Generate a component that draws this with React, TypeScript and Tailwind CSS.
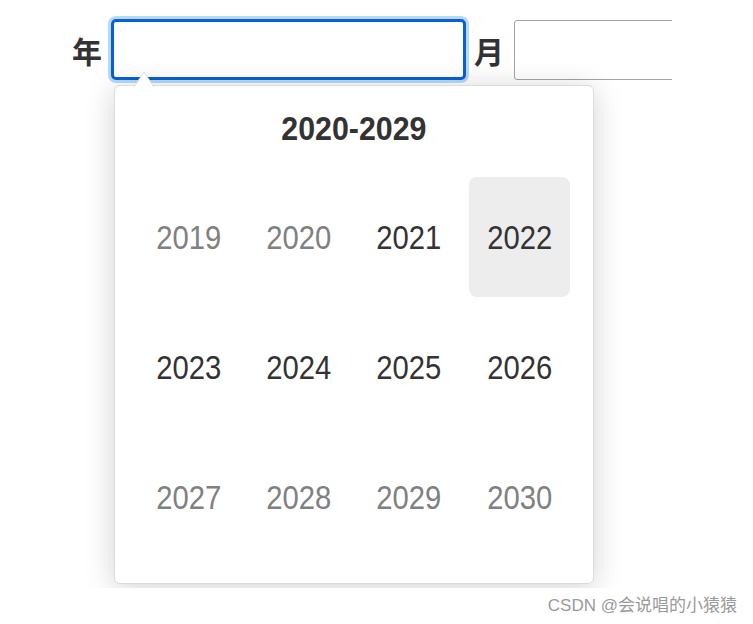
import React from "react";

const years: { y: number; muted: boolean; active?: boolean }[] = [
  { y: 2019, muted: true },
  { y: 2020, muted: true },
  { y: 2021, muted: false },
  { y: 2022, muted: false, active: true },
  { y: 2023, muted: false },
  { y: 2024, muted: false },
  { y: 2025, muted: false },
  { y: 2026, muted: false },
  { y: 2027, muted: true },
  { y: 2028, muted: true },
  { y: 2029, muted: true },
  { y: 2030, muted: true },
];

export default function App() {
  return (
    <div className="w-[753px] h-[624px] bg-white font-['Liberation_Sans','Noto_Sans_CJK_SC',sans-serif]">
      <div className="relative w-[672px] h-[588px] overflow-hidden">
        <div className="flex items-center pl-[72px] pt-[19px]">
          <span className="text-[30px] leading-[40px] font-bold text-[#333] font-['Noto_Sans_CJK_SC',sans-serif]">
            年
          </span>
          <div className="relative ml-[9px]">
            <div className="w-[355px] h-[61px] rounded-[5px] border-[3px] border-[#0860d8] ring-[3px] ring-[#b7dbf7] bg-white" />
            {/* popup */}
            <div className="absolute left-[3px] top-[66px] z-10 w-[480px] h-[499px] rounded-[6px] border border-[#dcdcdc] bg-white shadow-[0_4px_30px_rgba(0,0,0,0.18)] px-[23px] pt-[23px]">
              <svg
                className="absolute left-[18px] top-[-16px]"
                width="22"
                height="17"
                viewBox="0 0 22 17"
              >
                <path d="M1 17 L11 2 L21 17 Z" fill="#ffffff" />
                <path d="M1 17 L11 2 L21 17" fill="none" stroke="#dcdcdc" strokeWidth="1" />
              </svg>
              <div className="h-[40px] flex items-center justify-center">
                <span className="inline-block text-[33px] font-bold text-[#333] scale-x-[0.92]">
                  2020-2029
                </span>
              </div>
              <div className="mt-[28px] grid grid-cols-4 auto-rows-[120px] gap-x-[9px] gap-y-[10px]">
                {years.map((it) => (
                  <div
                    key={it.y}
                    className={
                      "flex items-center justify-center rounded-[8px] " +
                      (it.active ? "bg-[#ededed]" : "")
                    }
                  >
                    <span
                      className={
                        "inline-block text-[34px] scale-x-[0.86] " +
                        (it.muted ? "text-[#808080]" : "text-[#333]")
                      }
                    >
                      {it.y}
                    </span>
                  </div>
                ))}
              </div>
            </div>
          </div>
          <span className="ml-[8px] text-[30px] leading-[40px] font-bold text-[#333] font-['Noto_Sans_CJK_SC',sans-serif]">
            月
          </span>
          <div className="ml-[10px] w-[200px] h-[60px] shrink-0 rounded-[3px] border border-[#a3a3ab] bg-white" />
        </div>
      </div>
      <div className="flex justify-end pr-[16px] pt-[9px]">
        <span className="text-[17px] leading-[18px] text-[#9a9a9a]">CSDN @会说唱的小猿猿</span>
      </div>
    </div>
  );
}
